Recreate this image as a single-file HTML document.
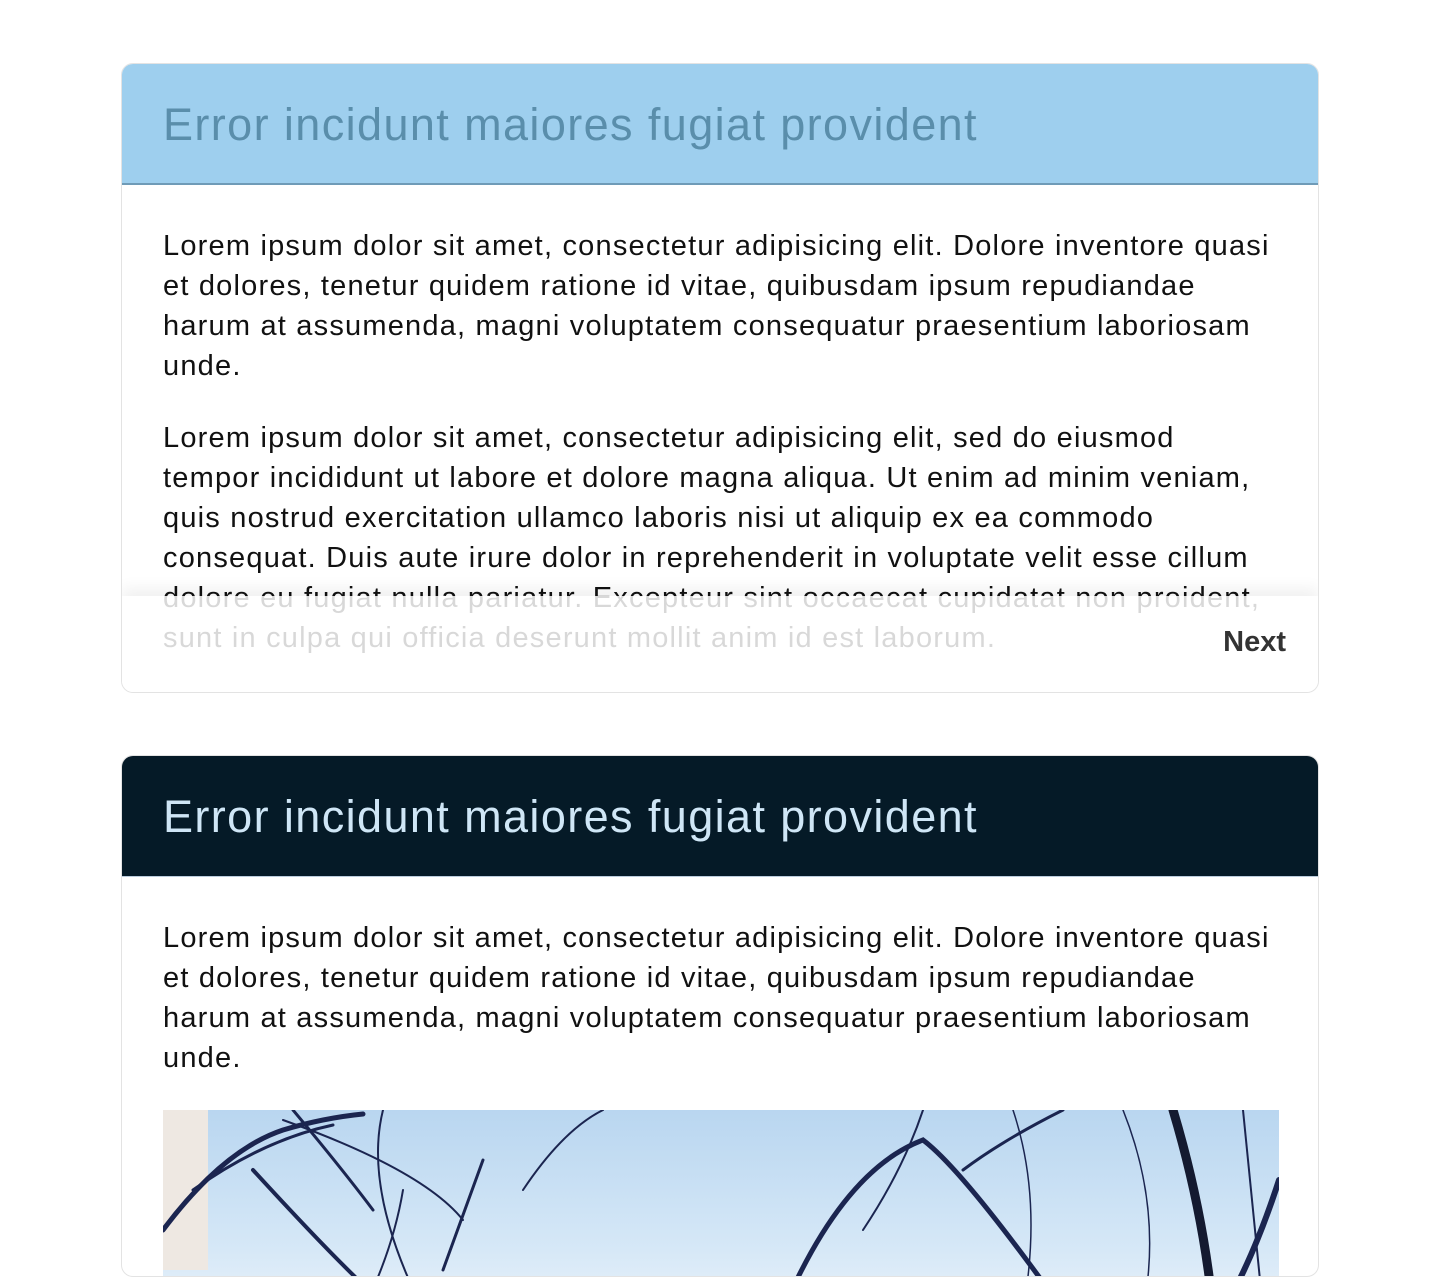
<!DOCTYPE html>
<html><head><style>
html,body{margin:0;padding:0;background:#fff;width:1430px;height:1260px;overflow:hidden;font-family:"Liberation Sans",Arial,sans-serif}
.card{position:absolute;left:121px;width:1196px;border:1px solid #e3e3e3;border-radius:12px;overflow:hidden;background:#fff}
.hd{height:121px;box-sizing:border-box;padding:0 41px;font-size:45px;line-height:121px;letter-spacing:1.4px}
.bd{padding:41px 38px 0 41px;font-size:29px;line-height:40px;color:#111;letter-spacing:1.2px}
.bd p{margin:0 0 32px 0}
.foot{position:absolute;left:0;right:0;top:532px;bottom:0;background:rgba(255,255,255,0.84);box-shadow:0 -8px 14px rgba(0,0,0,0.06)}
.next{position:absolute;right:32px;top:30px;font-weight:bold;font-size:29px;color:#333}
</style></head><body>
<div class="card" style="top:63px;height:628px">
<div class="hd" style="background:#9ecfee;color:#5a8eab;border-bottom:2px solid #6f9bb7">Error incidunt maiores fugiat provident</div>
<div class="bd">
<p>Lorem ipsum dolor sit amet, consectetur adipisicing elit. Dolore inventore quasi et dolores, tenetur quidem ratione id vitae, quibusdam ipsum repudiandae harum at assumenda, magni voluptatem consequatur praesentium laboriosam unde.</p>
<p>Lorem ipsum dolor sit amet, consectetur adipisicing elit, sed do eiusmod tempor incididunt ut labore et dolore magna aliqua. Ut enim ad minim veniam, quis nostrud exercitation ullamco laboris nisi ut aliquip ex ea commodo consequat. Duis aute irure dolor in reprehenderit in voluptate velit esse cillum dolore eu fugiat nulla pariatur. Excepteur sint occaecat cupidatat non proident, sunt in culpa qui officia deserunt mollit anim id est laborum.</p>
</div>
<div class="foot"><div class="next">Next</div></div>
</div>
<div class="card" style="top:755px;height:520px">
<div class="hd" style="background:#051a27;color:#cfe6f6;border-bottom:1px solid #bcd">Error incidunt maiores fugiat provident</div>
<div class="bd">
<p>Lorem ipsum dolor sit amet, consectetur adipisicing elit. Dolore inventore quasi et dolores, tenetur quidem ratione id vitae, quibusdam ipsum repudiandae harum at assumenda, magni voluptatem consequatur praesentium laboriosam unde.</p>
</div>
<div style="position:absolute;left:41px;top:354px;width:1116px;height:200px;background:linear-gradient(180deg,#b9d6f0,#d6e8f7 70%,#e8f1f9);overflow:hidden">
<svg width="1116" height="200" viewBox="0 0 1116 200" fill="none" stroke="#1b2550" stroke-linecap="round">
<rect x="0" y="0" width="45" height="160" fill="#eee8e2" stroke="none"/>
<path d="M0 120 Q60 40 120 20 Q160 8 200 4" stroke-width="5"/>
<path d="M30 80 Q100 30 170 15" stroke-width="3"/>
<path d="M90 60 Q200 180 230 200" stroke-width="4"/>
<path d="M130 0 Q180 60 210 100" stroke-width="3"/>
<path d="M220 0 Q200 80 260 200" stroke-width="2"/>
<path d="M120 10 Q260 60 300 110" stroke-width="2"/>
<path d="M200 200 Q230 140 240 80" stroke-width="2"/>
<path d="M280 160 L320 50" stroke-width="3"/>
<path d="M360 80 Q400 20 440 0" stroke-width="2"/>
<path d="M620 200 Q680 60 760 30 Q800 60 900 200" stroke-width="5"/>
<path d="M760 0 Q740 60 700 120" stroke-width="2"/>
<path d="M900 0 Q840 30 800 60" stroke-width="3"/>
<path d="M1010 0 Q1040 100 1050 200" stroke-width="9" stroke="#141a30"/>
<path d="M1116 70 Q1090 150 1060 200" stroke-width="6"/>
<path d="M960 0 Q1000 100 980 200" stroke-width="1.5"/>
<path d="M850 0 Q880 90 860 200" stroke-width="1.5"/>
<path d="M1080 0 L1100 200" stroke-width="2"/>
</svg>
</div>
</div>
</body></html>
